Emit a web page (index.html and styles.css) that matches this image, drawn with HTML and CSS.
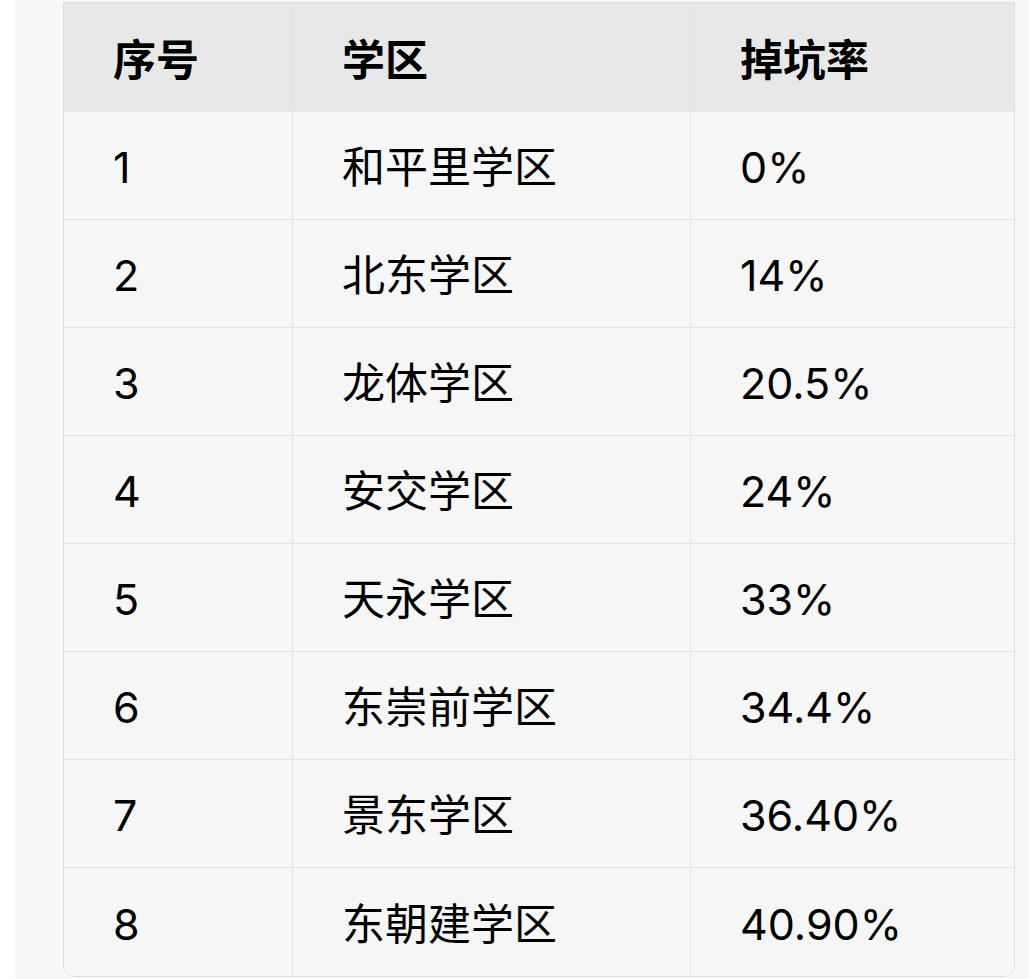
FILE: index.html
```html
<!DOCTYPE html>
<html lang="zh">
<head>
<meta charset="utf-8">
<link rel="stylesheet" href="styles.css">
</head>
<body>
<div class="panel">
  <table class="rates">
    <colgroup>
      <col class="c1"><col class="c2"><col class="c3">
    </colgroup>
    <thead>
      <tr><th>序号</th><th>学区</th><th>掉坑率</th></tr>
    </thead>
    <tbody>
      <tr><td>1</td><td>和平里学区</td><td>0%</td></tr>
      <tr><td>2</td><td>北东学区</td><td>14%</td></tr>
      <tr><td>3</td><td>龙体学区</td><td>20.5%</td></tr>
      <tr><td>4</td><td>安交学区</td><td>24%</td></tr>
      <tr><td>5</td><td>天永学区</td><td>33%</td></tr>
      <tr><td>6</td><td>东崇前学区</td><td>34.4%</td></tr>
      <tr><td>7</td><td>景东学区</td><td>36.40%</td></tr>
      <tr><td>8</td><td>东朝建学区</td><td>40.90%</td></tr>
    </tbody>
  </table>
</div>
</body>
</html>
```

FILE: styles.css
```css
html, body {
  margin: 0;
  padding: 0;
  background: #ffffff;
}
body {
  font-family: Inter, "Noto Sans CJK SC", sans-serif;
  color: #000;
}
.panel {
  margin-left: 15px;
  background: #f7f7f7;
  padding: 2px 0 5px 48px;
  height: 972px;
}
.rates {
  border-collapse: separate;
  border-spacing: 0;
  width: 950px;
  table-layout: fixed;
  border: 1px solid #dcdcdc;
  border-radius: 0 0 12px 12px;
  overflow: hidden;
  font-size: 43px;
}
.c1 { width: 229px; }
.c2 { width: 398px; }
.c3 { width: 323px; }
.rates th, .rates td {
  height: 108px;
  padding: 4px 0 0 49px;
  text-align: left;
  vertical-align: middle;
  border-right: 1px solid #e2e2e2;
  border-bottom: 1px solid #e2e2e2;
  box-sizing: border-box;
  line-height: 1;
}
.rates th:last-child, .rates td:last-child { border-right: none; }
.rates tbody tr:last-child td { border-bottom: none; }
.rates th {
  background: #e8e8e8;
  font-weight: 700;
  color: #000;
  height: 109px;
  padding-top: 6px;
}
.rates td {
  background: #f6f6f6;
  font-weight: 400;
}
```
